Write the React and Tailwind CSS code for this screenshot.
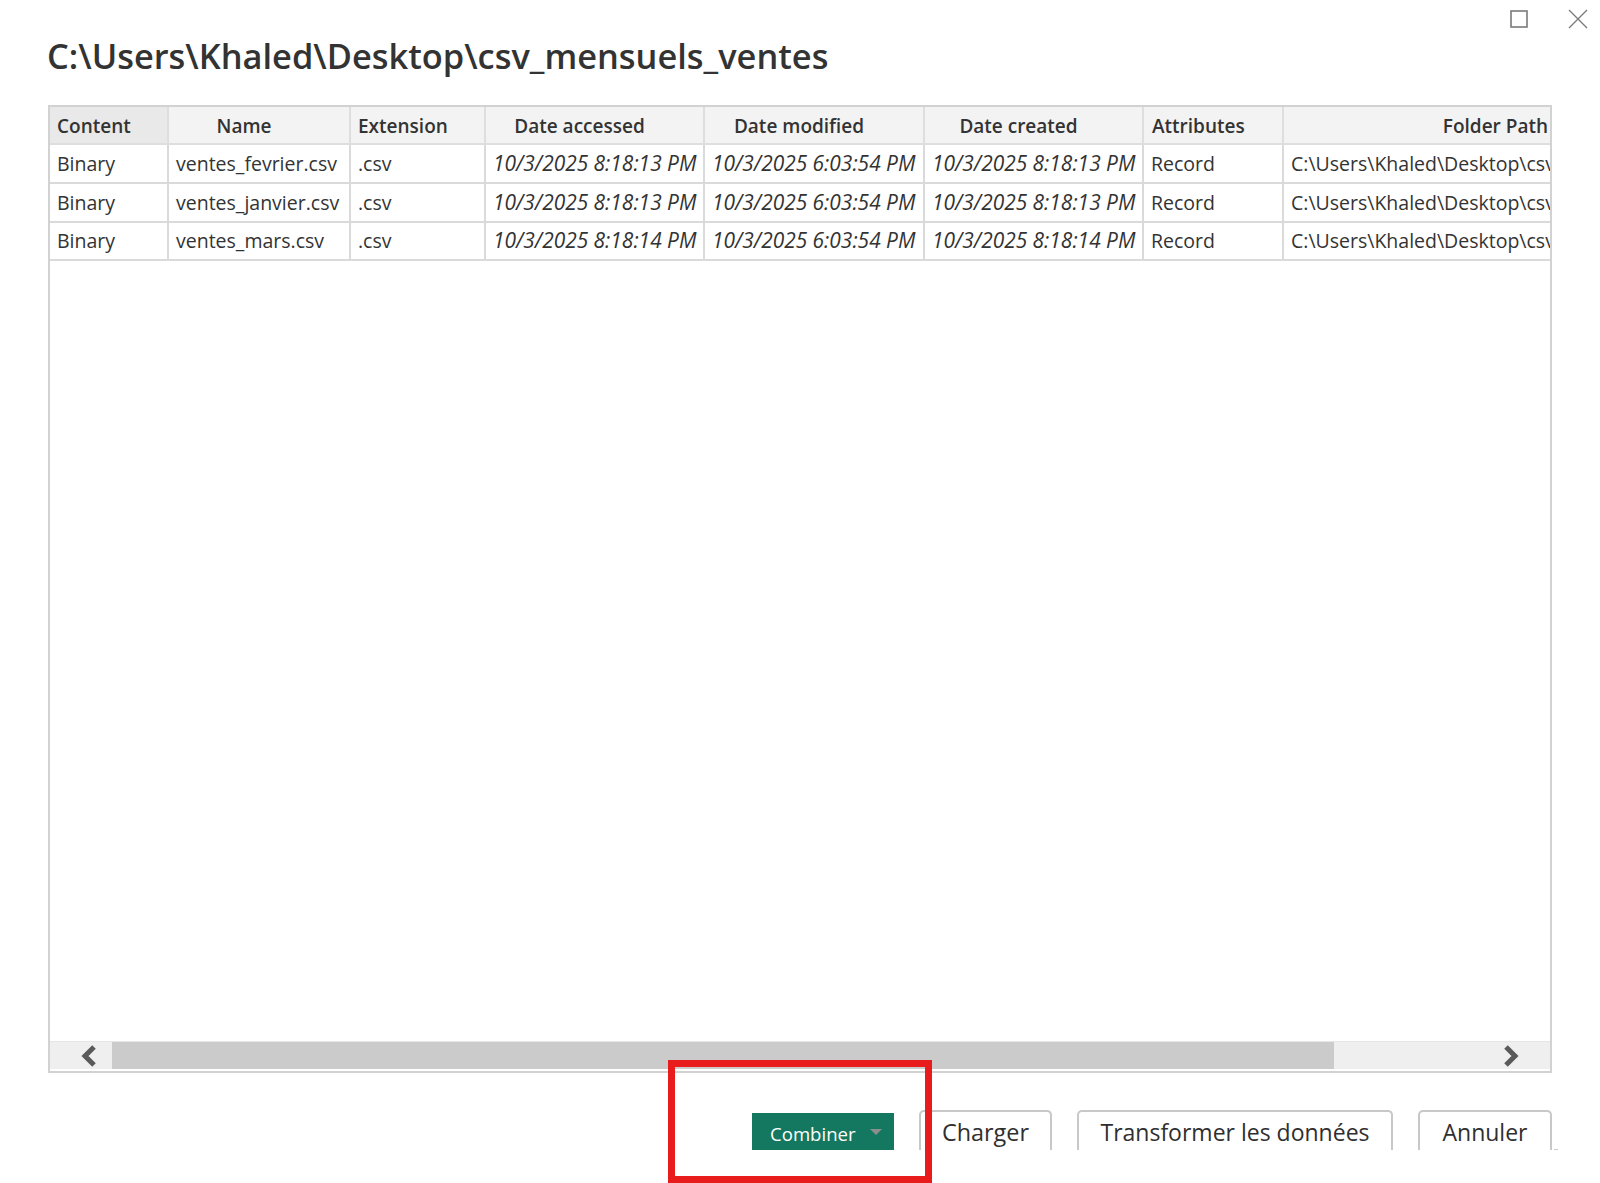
const rows = [
  ["Binary", "ventes_fevrier.csv", ".csv", "10/3/2025 8:18:13 PM", "10/3/2025 6:03:54 PM", "10/3/2025 8:18:13 PM", "Record", "C:\\Users\\Khaled\\Desktop\\csv_mensuels_ventes\\"],
  ["Binary", "ventes_janvier.csv", ".csv", "10/3/2025 8:18:13 PM", "10/3/2025 6:03:54 PM", "10/3/2025 8:18:13 PM", "Record", "C:\\Users\\Khaled\\Desktop\\csv_mensuels_ventes\\"],
  ["Binary", "ventes_mars.csv", ".csv", "10/3/2025 8:18:14 PM", "10/3/2025 6:03:54 PM", "10/3/2025 8:18:14 PM", "Record", "C:\\Users\\Khaled\\Desktop\\csv_mensuels_ventes\\"],
];

const heads = [
  ["Content", "text-left pl-[7px] bg-[#e9e9e9]"],
  ["Name", "text-center pr-[30px] bg-[#f3f3f3]"],
  ["Extension", "text-left pl-[7px] bg-[#f3f3f3]"],
  ["Date accessed", "text-center pr-[30px] bg-[#f3f3f3]"],
  ["Date modified", "text-center pr-[30px] bg-[#f3f3f3]"],
  ["Date created", "text-center pr-[30px] bg-[#f3f3f3]"],
  ["Attributes", "text-left pl-2 bg-[#f3f3f3]"],
  ["Folder Path", "text-right pr-[3px] bg-[#f3f3f3]"],
];

function Chevron({ points }) {
  return (
    <svg width="22" height="24" viewBox="0 0 22 24" fill="none" stroke="#5a5a5a" strokeWidth="5">
      <polyline points={points} />
    </svg>
  );
}

export default function App() {
  return (
    <div className="relative w-[1600px] h-[1183px] overflow-hidden bg-white text-[#333] font-['Open_Sans','Noto_Sans',sans-serif]">
      <div className="flex justify-end items-start h-0">
        <svg className="mt-[9px] mr-[38px]" width="20" height="20" viewBox="0 0 20 20" fill="none" stroke="#7a7a7a" strokeWidth="1.6">
          <rect x="2" y="2" width="16" height="16" />
        </svg>
        <svg className="mt-[8px] mr-[11px]" width="22" height="22" viewBox="0 0 22 22" fill="none" stroke="#7a7a7a" strokeWidth="1.3">
          <path d="M2 2 L20 20 M20 2 L2 20" />
        </svg>
      </div>

      <div className="pl-[48px] pr-[48px]">
        <h1 className="h-[105px] pt-[32px] -ml-px text-[34.4px] leading-[48px] font-semibold text-[#333] whitespace-nowrap">
          C:\Users\Khaled\Desktop\csv_mensuels_ventes
        </h1>

        <div className="h-[968px] border-2 border-[#d2d2d2] flex flex-col overflow-hidden">
          <div className="flex-1 overflow-hidden">
            <table className="table-fixed w-[1502px] border-collapse text-[19.5px]">
              <colgroup>
                <col className="w-[118px]" />
                <col className="w-[182px]" />
                <col className="w-[135px]" />
                <col className="w-[219px]" />
                <col className="w-[220px]" />
                <col className="w-[219px]" />
                <col className="w-[140px]" />
                <col className="w-[269px]" />
              </colgroup>
              <thead>
                <tr className="h-[37px]">
                  {heads.map(([t, c]) => (
                    <th key={t} className={`pt-[2px] text-[19px] font-semibold border-r-2 border-b-2 border-[#dedede] whitespace-nowrap overflow-hidden ${c}`}>{t}</th>
                  ))}
                </tr>
              </thead>
              <tbody>
                {rows.map((r, i) => (
                  <tr key={i} className="h-[38.8px]">
                    {r.map((v, j) => (
                      <td key={j} className={`border-r-2 border-b-2 border-[#dadada] whitespace-nowrap overflow-hidden ${j >= 3 && j <= 5 ? "italic text-[20.9px] pl-[7px]" : "pl-[7px]"}`}>{v}</td>
                    ))}
                  </tr>
                ))}
              </tbody>
            </table>
          </div>
          <div className="h-[28px] mb-[2px] bg-[#efefef] border-t border-[#e6e6e6] flex items-center">
            <div className="w-[49px] flex justify-end"><Chevron points="17,3 8,12 17,21" /></div>
            <div className="ml-[13px] w-[1222px] h-full bg-[#cbcbcb]" />
            <div className="flex-1 flex justify-end pr-[27px]"><Chevron points="5,3 14,12 5,21" /></div>
          </div>
        </div>

        <div className="mt-[37px] h-[40px] flex items-end justify-end">
          <button className="w-[142px] h-[37px] bg-[#13785f] text-white text-[18.6px] flex items-center pl-[18px] pt-[5px]">
            Combiner
            <span className="ml-[14px] mb-[5px] border-x-[6px] border-x-transparent border-t-[6px] border-t-[#8a8f8c]" />
          </button>
          <button className="ml-[25px] w-[133px] h-[40px] border-2 border-b-0 border-[#c8c8c8] rounded-t-[5px] pt-[3px] text-[23.4px] font-medium text-[#2f2f2f]">Charger</button>
          <button className="ml-[25px] w-[316px] h-[40px] border-2 border-b-0 border-[#c8c8c8] rounded-t-[5px] pt-[3px] text-[23px] font-medium text-[#2f2f2f]">Transformer les données</button>
          <button className="ml-[25px] w-[134px] h-[40px] border-2 border-b-0 border-[#c8c8c8] rounded-t-[5px] pt-[3px] text-[23px] font-medium text-[#2f2f2f]">Annuler</button>
        </div>
      </div>

      <div className="absolute left-[668px] top-[1060px] w-[264px] h-[123px] border-[7px] border-[#e81c1c]" />
      <div className="absolute left-[1554px] top-[1149px] w-[4px] h-px bg-[#c8c8c8]" />
    </div>
  );
}
